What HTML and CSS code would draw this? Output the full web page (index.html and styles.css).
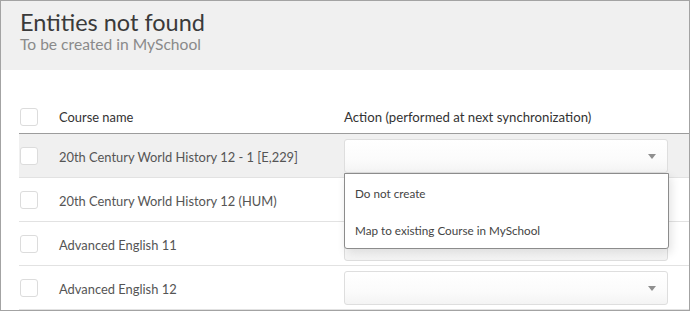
FILE: index.html
```html
<!DOCTYPE html>
<html lang="en">
<head>
  <meta charset="UTF-8" />
  <meta name="viewport" content="width=device-width, initial-scale=1.0"/>
  <title>Entities not found</title>
  <link rel="stylesheet" href="styles.css">
</head>
<body>

<div class="panel">
  <div class="panel-head">
    <h1>Entities not found</h1>
    <p>To be created in MySchool</p>
  </div>

  <div class="list">
    <div class="row head">
      <span class="check"></span>
      <span class="name">Course name</span>
      <span class="action">Action (performed at next synchronization)</span>
    </div>

    <div class="row active">
      <span class="check"></span>
      <span class="name">20th Century World History 12 - 1 [E,229]</span>
      <div class="select open">
        <span class="caret"></span>
        <ul class="menu">
          <li>Do not create</li>
          <li>Map to existing Course in MySchool</li>
        </ul>
      </div>
    </div>

    <div class="row">
      <span class="check"></span>
      <span class="name">20th Century World History 12 (HUM)</span>
      <div class="select"><span class="caret"></span></div>
    </div>

    <div class="row">
      <span class="check"></span>
      <span class="name">Advanced English 11</span>
      <div class="select"><span class="caret"></span></div>
    </div>

    <div class="row">
      <span class="check"></span>
      <span class="name">Advanced English 12</span>
      <div class="select"><span class="caret"></span></div>
    </div>
  </div>
</div>

</body>
</html>
```

FILE: styles.css
```css
* {
  box-sizing: border-box;
}

body {
  margin: 0;
  font-family: Lato, 'Liberation Sans', sans-serif;
  background-color: #ffffff;
}

.panel {
  width: 690px;
  height: 311px;
  border: 1px solid #a3a3a3;
  overflow: hidden;
}

.panel-head {
  height: 69px;
  background-color: #f0f0f0;
  padding: 6px 19px 0;
}

.panel-head h1 {
  margin: 0;
  font-size: 23.5px;
  font-weight: normal;
  line-height: 30px;
  color: #3a3a3a;
}

.panel-head p {
  margin: 0;
  font-size: 15.6px;
  line-height: 15px;
  color: #8a8a8a;
}

.list {
  margin-top: 30px;
  margin-left: 18px;
}

.row {
  display: grid;
  grid-template-columns: 39px 285px 324px 1fr;
  align-items: center;
  height: 44px;
  padding-left: 1px;
  border-bottom: 1px solid #e2e2e2;
  font-size: 12.9px;
  color: #555;
}

.row.head {
  height: 34px;
  border-bottom: 1px solid #9c9c9c;
  color: #333;
}

.row.active {
  background-color: #f0f0f0;
}

.check {
  width: 18px;
  height: 18px;
  border: 1px solid #dcdcdc;
  border-radius: 3px;
  background-color: #fff;
}

.name {
  padding-top: 2px;
}

.head .name {
  padding-top: 0;
}

.action {
  grid-column: 3 / 5;
  font-size: 13.2px;
}

.select {
  position: relative;
  height: 34px;
  border: 1px solid #dedede;
  border-radius: 3px;
  background: linear-gradient(#ffffff, #fbfbfb 60%, #f4f4f4);
}

.caret {
  position: absolute;
  right: 11px;
  top: 14px;
  width: 0;
  height: 0;
  border-left: 4.5px solid transparent;
  border-right: 4.5px solid transparent;
  border-top: 5px solid #8f8f8f;
}

.menu {
  position: absolute;
  left: -1px;
  top: 33px;
  width: 325px;
  margin: 0;
  padding: 0;
  list-style: none;
  background-color: #fff;
  border: 1px solid #8c8c8c;
  border-radius: 0 0 3px 3px;
  box-shadow: 2px 4px 10px rgba(0, 0, 0, 0.12);
  z-index: 2;
}

.menu li {
  height: 37px;
  line-height: 38px;
  padding-left: 10px;
  font-size: 11.7px;
  color: #444;
}
```
